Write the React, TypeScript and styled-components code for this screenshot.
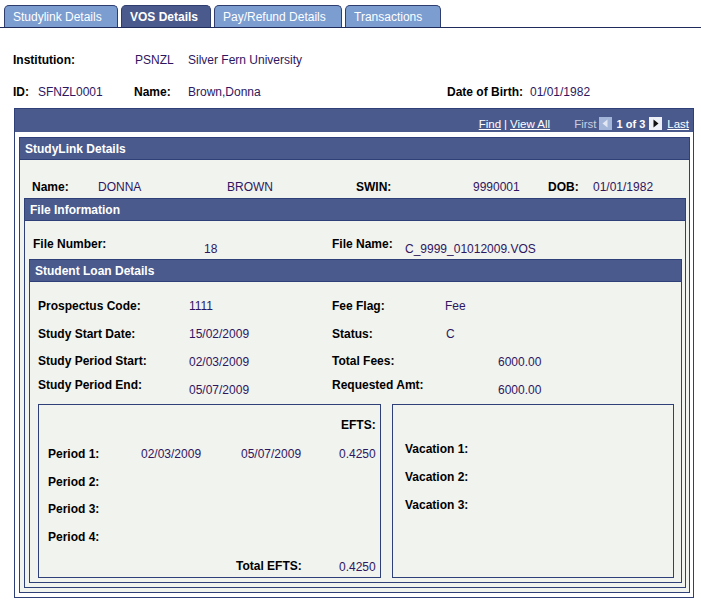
import React from "react";
import styled, { createGlobalStyle } from "styled-components";

const NAVY = "#4b5a8c";
const LINE = "#2f3f78";
const BODY = "#f1f3ef";
const VAL = "#2e1660";

const Global = createGlobalStyle`
  html, body { margin: 0; padding: 0; background: #fff; }
  body { font-family: "Liberation Sans", Arial, sans-serif; font-size: 12px; color: #000; }
  * { box-sizing: border-box; }
`;

const Page = styled.div`
  padding-top: 5px;
  width: 701px;
`;

const TabBar = styled.div`
  display: flex;
  align-items: flex-end;
  gap: 3px;
  padding-left: 4px;
  border-bottom: 1px solid #1f2b5a;
`;

const Tab = styled.div<{ $active?: boolean; $w: number }>`
  width: ${(p) => p.$w}px;
  height: 22px;
  border: 1px solid #2e3d6e;
  border-bottom: none;
  border-radius: 5px 5px 0 0;
  background: ${(p) => (p.$active ? NAVY : "#7b9dd0")};
  color: #fff;
  font-weight: ${(p) => (p.$active ? 700 : 400)};
  padding: 3px 0 0 8px;
  line-height: 17px;
  white-space: nowrap;
`;

const InfoGrid = styled.div`
  display: grid;
  grid-template-columns: 25px 96px 54px 259px 83px auto;
  row-gap: 18px;
  margin: 25px 0 0 13px;
  line-height: 14px;
`;

const Label = styled.div<{ $span?: number; $shift?: number }>`
  font-weight: 700;
  color: #000;
  white-space: nowrap;
  line-height: 14px;
  grid-column: ${(p) => (p.$span ? `span ${p.$span}` : "auto")};
  margin-left: ${(p) => p.$shift ?? 0}px;
`;

const Value = styled.div<{ $drop?: number; $shift?: number }>`
  color: ${VAL};
  white-space: nowrap;
  line-height: 14px;
  margin-top: ${(p) => p.$drop ?? 0}px;
  margin-left: ${(p) => p.$shift ?? 0}px;
`;

const Blank = styled.div``;

const ScrollBox = styled.div`
  margin: 9px 0 0 14px;
  width: 680px;
  border: 1px solid ${LINE};
  padding: 0 3px 4px 4px;
  background: #fff;
`;

const NavBar = styled.div`
  height: 23px;
  margin: 0 -3px 5px -4px;
  background: ${NAVY};
  display: flex;
  justify-content: flex-end;
  align-items: center;
  padding: 6px 4px 0 0;
  color: #fff;
  font-size: 11.5px;
  line-height: 14px;
  white-space: nowrap;
`;

const NavLink = styled.span<{ $gap?: number }>`
  color: #fff;
  text-decoration: underline;
  margin-left: ${(p) => p.$gap ?? 0}px;
`;

const NavText = styled.span<{ $gap?: number; $muted?: boolean; $bold?: boolean }>`
  color: ${(p) => (p.$muted ? "#c6cfe2" : "#fff")};
  font-weight: ${(p) => (p.$bold ? 700 : 400)};
  font-size: ${(p) => (p.$bold ? "11px" : "inherit")};
  margin-left: ${(p) => p.$gap ?? 0}px;
`;

const NavIcon = styled.svg<{ $gap?: number }>`
  display: block;
  margin-left: ${(p) => p.$gap ?? 0}px;
  flex: none;
`;

const GroupBox = styled.div<{ $mt?: number }>`
  border: 1px solid ${LINE};
  background: ${BODY};
  margin-top: ${(p) => p.$mt ?? 0}px;
`;

const GroupHeader = styled.div`
  height: 22px;
  background: ${NAVY};
  border-bottom: 1px solid ${LINE};
  color: #fff;
  font-weight: 700;
  line-height: 20px;
  padding: 1px 0 0 5px;
  white-space: nowrap;
`;

const GroupBody = styled.div<{ $pad: string }>`
  padding: ${(p) => p.$pad};
`;

const FieldGrid = styled.div<{ $cols: string; $rows?: string; $ml?: number; $mb?: number }>`
  display: grid;
  grid-template-columns: ${(p) => p.$cols};
  grid-template-rows: ${(p) => p.$rows ?? "auto"};
  align-items: start;
  margin-left: ${(p) => p.$ml ?? 0}px;
  margin-bottom: ${(p) => p.$mb ?? 0}px;
`;

const SubRow = styled.div`
  display: flex;
  gap: 11px;
`;

const SubBox = styled.div<{ $w: number; $pad: string }>`
  width: ${(p) => p.$w}px;
  height: 174px;
  border: 1px solid ${LINE};
  padding: ${(p) => p.$pad};
`;

const VacationList = styled.div`
  display: grid;
  grid-auto-rows: 28px;
`;

const PrevIcon = () => (
  <NavIcon $gap={2} width="13" height="13" viewBox="0 0 13 13">
    <rect x="0" y="0" width="13" height="13" fill="#a3b5d9" />
    <path d="M8.5 2.5 L3.5 6.5 L8.5 10.5 Z" fill="#e2e8f3" />
  </NavIcon>
);

const NextIcon = () => (
  <NavIcon $gap={4} width="13" height="13" viewBox="0 0 13 13">
    <rect x="0" y="0" width="13" height="13" fill="#eef1f7" />
    <path d="M4.5 2.5 L9.5 6.5 L4.5 10.5 Z" fill="#111" />
  </NavIcon>
);

export default function App() {
  return (
    <Page>
      <Global />
      <TabBar>
        <Tab $w={114}>Studylink Details</Tab>
        <Tab $w={90} $active>
          VOS Details
        </Tab>
        <Tab $w={128}>Pay/Refund Details</Tab>
        <Tab $w={96}>Transactions</Tab>
      </TabBar>

      <InfoGrid>
        <Label $span={2}>Institution:</Label>
        <Value $shift={1}>PSNZL</Value>
        <Value>Silver Fern University</Value>
        <Blank />
        <Blank />
        <Label>ID:</Label>
        <Value>SFNZL0001</Value>
        <Label>Name:</Label>
        <Value>Brown,Donna</Value>
        <Label>Date of Birth:</Label>
        <Value>01/01/1982</Value>
      </InfoGrid>

      <ScrollBox>
        <NavBar>
          <NavLink>Find</NavLink>
          <NavText $gap={3}>|</NavText>
          <NavLink $gap={3}>View All</NavLink>
          <NavText $gap={24} $muted>
            First
          </NavText>
          <PrevIcon />
          <NavText $gap={5} $bold>
            1 of 3
          </NavText>
          <NextIcon />
          <NavLink $gap={5}>Last</NavLink>
        </NavBar>

        <GroupBox>
          <GroupHeader>StudyLink Details</GroupHeader>
          <GroupBody $pad="20px 3px 4px 4px">
            <FieldGrid $cols="66px 129px 129px 117px 75px 45px auto" $ml={8} $mb={4}>
              <Label>Name:</Label>
              <Value>DONNA</Value>
              <Value>BROWN</Value>
              <Label>SWIN:</Label>
              <Value>9990001</Value>
              <Label>DOB:</Label>
              <Value>01/01/1982</Value>
            </FieldGrid>

            <GroupBox>
              <GroupHeader>File Information</GroupHeader>
              <GroupBody $pad="16px 3px 4px 4px">
                <FieldGrid $cols="171px 128px 73px auto" $ml={4} $mb={3}>
                  <Label>File Number:</Label>
                  <Value $drop={5}>18</Value>
                  <Label>File Name:</Label>
                  <Value $drop={5}>C_9999_01012009.VOS</Value>
                </FieldGrid>

                <GroupBox>
                  <GroupHeader>Student Loan Details</GroupHeader>
                  <GroupBody $pad="17px 7px 4px 8px">
                    <FieldGrid $cols="151px 143px 113px auto" $rows="28px 27px 24px 19px" $mb={7}>
                      <Label>Prospectus Code:</Label>
                      <Value>1111</Value>
                      <Label>Fee Flag:</Label>
                      <Value>Fee</Value>

                      <Label>Study Start Date:</Label>
                      <Value>15/02/2009</Value>
                      <Label>Status:</Label>
                      <Value $shift={1}>C</Value>

                      <Label>Study Period Start:</Label>
                      <Value $drop={1}>02/03/2009</Value>
                      <Label>Total Fees:</Label>
                      <Value $drop={1} $shift={53}>
                        6000.00
                      </Value>

                      <Label>Study Period End:</Label>
                      <Value $drop={5}>05/07/2009</Value>
                      <Label>Requested Amt:</Label>
                      <Value $drop={5} $shift={53}>
                        6000.00
                      </Value>
                    </FieldGrid>

                    <SubRow>
                      <SubBox $w={343} $pad="13px 0 0 9px">
                        <FieldGrid $cols="93px 100px 98px auto" $rows="29px 28px 27px 28px 29px auto">
                          <Blank />
                          <Blank />
                          <Blank />
                          <Label $shift={2}>EFTS:</Label>

                          <Label>Period 1:</Label>
                          <Value>02/03/2009</Value>
                          <Value>05/07/2009</Value>
                          <Value>0.4250</Value>

                          <Label>Period 2:</Label>
                          <Blank />
                          <Blank />
                          <Blank />

                          <Label>Period 3:</Label>
                          <Blank />
                          <Blank />
                          <Blank />

                          <Label>Period 4:</Label>
                          <Blank />
                          <Blank />
                          <Blank />

                          <Blank />
                          <Blank />
                          <Label $shift={-5}>Total EFTS:</Label>
                          <Value $drop={1}>0.4250</Value>
                        </FieldGrid>
                      </SubBox>
                      <SubBox $w={282} $pad="37px 0 0 12px">
                        <VacationList>
                          <Label>Vacation 1:</Label>
                          <Label>Vacation 2:</Label>
                          <Label>Vacation 3:</Label>
                        </VacationList>
                      </SubBox>
                    </SubRow>
                  </GroupBody>
                </GroupBox>
              </GroupBody>
            </GroupBox>
          </GroupBody>
        </GroupBox>
      </ScrollBox>
    </Page>
  );
}
